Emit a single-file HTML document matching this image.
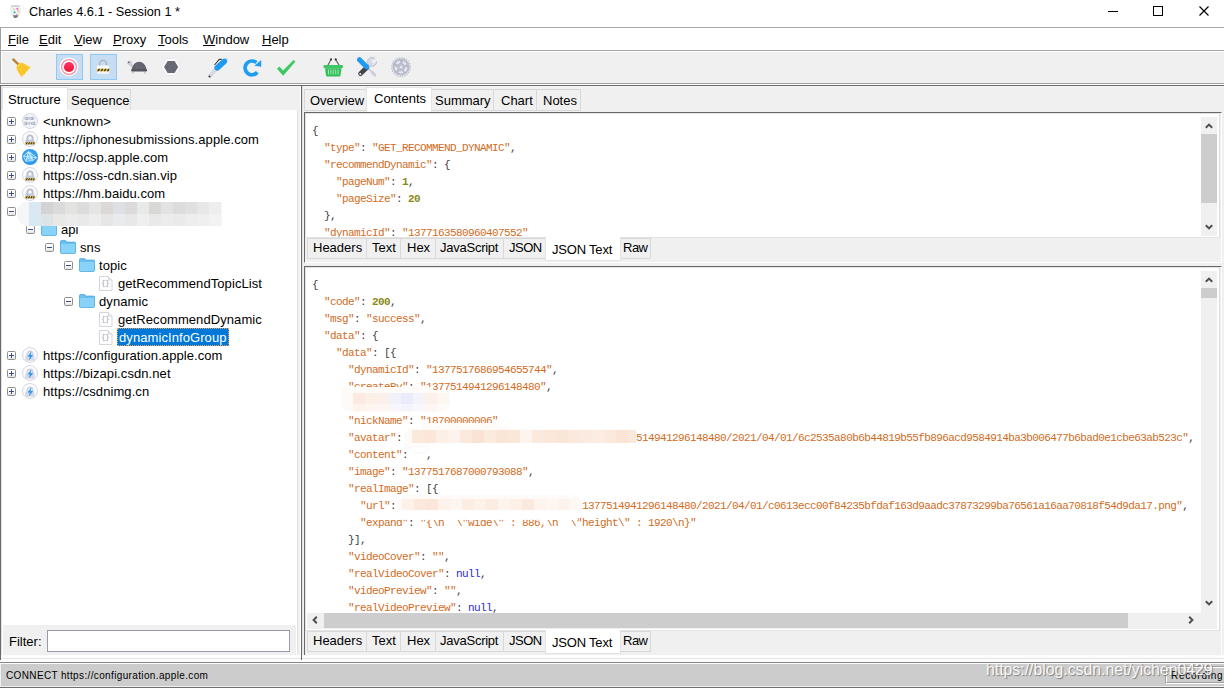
<!DOCTYPE html>
<html lang="en">
<head>
<meta charset="utf-8">
<title>Charles 4.6.1 - Session 1 *</title>
<style>
html,body{margin:0;padding:0;}
body{width:1224px;height:688px;position:relative;overflow:hidden;background:#f0f0f0;
  font-family:"Liberation Sans","Noto Sans CJK SC",sans-serif;font-size:13px;color:#000;}
.abs{position:absolute;}
#titlebar{left:0;top:0;width:1224px;height:27px;background:#fff;}
#title{left:29px;top:4px;font-size:12.7px;line-height:16px;white-space:nowrap;}
#menubar{left:0;top:27px;width:1224px;height:24px;background:#fff;border-top:1px solid #a8a8a8;border-bottom:1px solid #a8a8a8;box-sizing:border-box;}
.menu{position:absolute;top:4px;line-height:16px;font-size:13px;white-space:nowrap;}
.menu u{text-decoration:underline;text-underline-offset:1px;}
#toolbar{left:0;top:51px;width:1224px;height:32px;background:#f0f0f0;}
.tbsel{position:absolute;top:3px;width:26px;height:26px;box-sizing:border-box;background:#c5def3;border:1px solid #90c8f6;}
.l{position:absolute;}
/* tabs */
.tab{position:absolute;box-sizing:border-box;background:#f0f0f0;border:1px solid #d9d9d9;font-size:13px;line-height:16px;white-space:nowrap;padding:3px 0 0 4px;}
.tab.sel{background:#fff;border-color:#e3e3e3;border-bottom:none;}
/* tree */
.row{position:absolute;left:0;height:18px;line-height:18px;white-space:nowrap;font-size:13px;letter-spacing:0.08px;}
.pm{position:absolute;width:9px;height:9px;box-sizing:border-box;border:1px solid #8e8e8e;background:linear-gradient(#fff 45%,#e2e2e2);border-radius:1.5px;}
.pm:before{content:"";position:absolute;left:1px;top:3px;width:5px;height:1px;background:#3a4a8c;}
.pm.plus:after{content:"";position:absolute;left:3px;top:1px;width:1px;height:5px;background:#3a4a8c;}
.code{position:absolute;font-family:"Liberation Mono",monospace;font-size:11px;letter-spacing:-0.6px;line-height:17px;white-space:pre;color:#3c3c3c;}
.code .s{color:#d06c1e;}
.code .n{color:#8a8a1a;font-weight:bold;}
.code .k{color:#2828e0;}
</style>
</head>
<body>
<!-- TITLE BAR -->
<div id="titlebar" class="abs"></div>
<div id="title" class="abs">Charles 4.6.1 - Session 1 *</div>
<svg class="abs" style="left:9px;top:3px" width="17" height="17" viewBox="0 0 17 17"><path d="M11 2.800c2.500-1 4.300 1 3.500 3.600" fill="none" stroke="#e6e0ea" stroke-width=".7"/><path d="M2.200 3.200C2 6 1.900 8.500 2.400 10.200L4 12.600h5.200L10.800 10.200C11.300 8.500 11 6 10.600 3.200z" fill="#f3f4f7" stroke="#d4d6db" stroke-width=".6"/><ellipse cx="6.300" cy="3" rx="4.600" ry="1.100" fill="#d2d4d7"/><path d="M3.800 12.300h5.600l-.9 1.900-2.600 1.100-1.300-1z" fill="#777985"/><circle cx="5.500" cy="9.200" r="1.500" fill="#9fdcf0"/><circle cx="5.600" cy="9.300" r=".7" fill="#58b04a"/><circle cx="8.300" cy="5.700" r="1" fill="#f05cc0"/><circle cx="9" cy="8" r=".8" fill="#f27ac8"/><circle cx="5" cy="6.300" r=".8" fill="#a6cf4c"/><circle cx="9" cy="6.900" r=".7" fill="#f1d83c"/><circle cx="9.300" cy="10.400" r=".8" fill="#f3e05a"/><circle cx="7.600" cy="11.600" r=".6" fill="#b07ad0"/></svg>
<svg class="abs" style="left:1107px;top:5px" width="104" height="12" viewBox="0 0 104 12"><g fill="none" stroke="#000" stroke-width="1"><path d="M1 6.500h10"/><rect x="46.500" y="1.500" width="9" height="9"/><path d="M92.500 1.500l9 9M101.500 1.500l-9 9" stroke-width="1.150"/></g></svg>
<!-- MENU BAR -->
<div id="menubar" class="abs">
  <span class="menu" style="left:8px"><u>F</u>ile</span>
  <span class="menu" style="left:39px"><u>E</u>dit</span>
  <span class="menu" style="left:74px"><u>V</u>iew</span>
  <span class="menu" style="left:113px"><u>P</u>roxy</span>
  <span class="menu" style="left:158px"><u>T</u>ools</span>
  <span class="menu" style="left:203px"><u>W</u>indow</span>
  <span class="menu" style="left:262px"><u>H</u>elp</span>
</div>
<!-- TOOLBAR -->
<div id="toolbar" class="abs">
  <div class="tbsel" style="left:56px;width:27px"></div>
  <div class="tbsel" style="left:90px;width:27px"></div>
  <div class="l" style="left:0;top:0;width:1224px;height:1px;background:#fff"></div>
  <!-- broom -->
  <svg class="l" style="left:11px;top:6px" width="22" height="22" viewBox="0 0 22 22"><path d="M2.400 2.600L7.400 7.400" stroke="#b8863a" stroke-width="2.500" stroke-linecap="round"/><path d="M8.400 6C10 5.600 12 5.800 13.500 6.800c2 1.400 4 2.800 6.300 3.400C17 12.500 15 15 13.800 17.300c-1.200.3-2.400 1.500-3.300 2.900C9 17.500 6.800 15 5.800 12.200 5.400 10.500 5.600 8.800 6.400 7.800z" fill="#fbc92e"/><path d="M9 8.500c1.500 3 3 5.500 4.800 8.500M7.200 10.500c1 2.800 2.300 5.300 3.700 8M11.500 7.500c1.400 2.300 3 4.300 5 6.200" stroke="#f4b81f" stroke-width=".7" fill="none" opacity=".8"/><path d="M6.300 8.700L9.800 5.900" stroke="#fddc5c" stroke-width="1" opacity=".7"/></svg>
  <!-- record -->
  <svg class="l" style="left:59px;top:6px" width="20" height="20" viewBox="0 0 20 20"><defs><linearGradient id="rg" x1="0" y1="0" x2="0" y2="1"><stop offset="0" stop-color="#ff3470"/><stop offset="1" stop-color="#ee1530"/></linearGradient></defs><circle cx="10" cy="10.300" r="9.500" fill="#c9cdd6" opacity=".55"/><circle cx="10" cy="9.900" r="9.400" fill="#fdfdfe"/><circle cx="10" cy="10" r="7.400" fill="none" stroke="#f7889f" stroke-width="1.200"/><circle cx="10" cy="10" r="5.100" fill="url(#rg)"/></svg>
  <!-- lock -->
  <svg class="l" style="left:95px;top:7px" width="16" height="17" viewBox="0 0 16 17"><path d="M4.600 8.400V5.800a3.400 3.400 0 0 1 6.800 0v2.600" fill="none" stroke="#b6bac6" stroke-width="1.800"/><rect x="1.900" y="8" width="12.200" height="8" rx="1.300" fill="#d9dce4"/><rect x="1.900" y="7.600" width="12.200" height="7.800" rx="1.200" fill="#fcfcfe"/><rect x="1.900" y="10.800" width="12.200" height="2.700" fill="#f2c21c"/><path d="M3.600 10.800l-1.500 2.700h1.600l1.500-2.700zM6.800 10.800l-1.500 2.700h1.600l1.500-2.700zM10 10.800l-1.500 2.700h1.600l1.500-2.700zM13.200 10.800l-1.500 2.700h1.600l.8-1.500v-1.200z" fill="#30343f"/><rect x="1.900" y="13.500" width="12.200" height="1.900" rx=".9" fill="#f4f5f8"/></svg>
  <!-- turtle -->
  <svg class="l" style="left:126px;top:8px" width="23" height="16" viewBox="0 0 23 16"><path d="M4.300 4.800L7.800 9" stroke="#c9cbdc" stroke-width="2.600" stroke-linecap="round"/><ellipse cx="3.600" cy="4" rx="2.600" ry="2.200" fill="#c9cbdc"/><circle cx="2.700" cy="3.300" r=".75" fill="#4a4c55"/><path d="M5.700 12.500h2.400v1a1.200 1.200 0 0 1-2.400 0zM17.700 12.500h2.400v1a1.200 1.200 0 0 1-2.400 0z" fill="#c9cbdc"/><path d="M5.800 10.600C6.600 5.600 9.500 2.800 13.100 2.800s6.600 2.800 7.400 7.800z" fill="#5f616c"/><rect x="5.100" y="10" width="16" height="2.500" rx="1.200" fill="#55575f"/><path d="M10.500 4.500v5.500M13.100 4v6M15.700 4.500v5.500" stroke="#6f717c" stroke-width=".7" fill="none"/></svg>
  <!-- hexagon -->
  <svg class="l" style="left:160px;top:5px" width="22" height="22" viewBox="0 0 22 22"><path d="M1.300 11L6.200 2.500h9.800L20.900 11 16 19.500H6.200z" fill="#fcfcfe" stroke="#e1e3ef" stroke-width=".7"/><path d="M4.050 11L7.600 4.900h7l3.550 6.100-3.550 6.100h-7z" fill="#676975"/></svg>
  <!-- pen -->
  <svg class="l" style="left:207px;top:6px" width="22" height="22" viewBox="0 0 22 22"><path d="M3.400 18.600L9 12" stroke="#d5d8e3" stroke-width="3.800" stroke-linecap="round"/><circle cx="2.500" cy="19.500" r="1" fill="#2a2c30"/><path d="M18.300 3.300l1.100-1.100" stroke="#d3d6e3" stroke-width="2.600" stroke-linecap="round"/><path d="M10.200 10.800L17.300 4.400" stroke="#1e9bf0" stroke-width="5.600" stroke-linecap="round"/><path d="M7.500 8L12.300 2.400h2.400" stroke="#3a3c42" stroke-width="1.100" fill="none"/></svg>
  <!-- refresh -->
  <svg class="l" style="left:241px;top:6px" width="22" height="22" viewBox="0 0 22 22"><path d="M16.300 15.300A6.900 6.900 0 1 1 15.400 5.600" fill="none" stroke="#1e9df2" stroke-width="3.700"/><path d="M20.200 3v6.800L13.400 8.800z" fill="#1e9df2"/></svg>
  <!-- check -->
  <svg class="l" style="left:275px;top:8px" width="22" height="18" viewBox="0 0 22 18"><path d="M2 9.800l2.600-2.300 3.400 4L18.600 1l1.900 1.600L8.200 16.800z" fill="#3dc864"/></svg>
  <!-- basket -->
  <svg class="l" style="left:322px;top:6px" width="22" height="20" viewBox="0 0 22 20"><path d="M9 2.600L5.500 9M13.700 2.600L17.600 9" stroke="#5b5e66" stroke-width="1.100" fill="none"/><circle cx="9" cy="2.400" r="1.100" fill="#3a3c42"/><circle cx="13.700" cy="2.400" r="1.100" fill="#3a3c42"/><rect x="1.500" y="8" width="19.500" height="3.200" rx="1.200" fill="#3dc864"/><path d="M3 11.200h16.500l-1 7.300c-.1.700-.6 1.100-1.300 1.100H5.300c-.7 0-1.200-.4-1.300-1.100z" fill="#35bf5c"/><path d="M6.500 12.500v5M8.900 12.500v5M11.300 12.500v5M13.700 12.500v5M16.100 12.500v5" stroke="#9fe8b5" stroke-width="1"/></svg>
  <!-- tools -->
  <svg class="l" style="left:356px;top:5px" width="22" height="22" viewBox="0 0 22 22"><path d="M12.300 12.500L16 16.200" stroke="#c3c6d6" stroke-width="1.400"/><path d="M16.200 16.400l2.600 2.600" stroke="#cbcedd" stroke-width="3" stroke-linecap="round"/><path d="M13.500 8.600L11 11" stroke="#cdd0df" stroke-width="3"/><circle cx="16" cy="5.900" r="4.600" fill="#d6d9e6" stroke="#b9bccc" stroke-width=".8"/><path d="M16 6l4-4 1.800 1.800-4 4z" fill="#f0f0f0"/><circle cx="16.900" cy="5" r="1.350" fill="#f0f0f0"/><path d="M10.900 11.500L4.500 17.700" stroke="#42444c" stroke-width="4.600" stroke-linecap="round"/><circle cx="4.300" cy="17.900" r=".95" fill="#f4f4f6"/><path d="M3.500 3.700l7 7" stroke="#1e9bf0" stroke-width="5" stroke-linecap="round"/><path d="M10.500 10.700l1.900 1.900" stroke="#1e9bf0" stroke-width="3.200"/></svg>
  <!-- gear -->
  <svg class="l" style="left:391px;top:6px" width="21" height="21" viewBox="0 0 21 21"><circle cx="10" cy="10.100" r="9.200" fill="none" stroke="#b9bccc" stroke-width="1.400" stroke-dasharray="1.300 1.108"/><circle cx="10" cy="10.100" r="8.500" fill="#b9bccc"/><circle cx="10" cy="10.100" r="5.300" fill="none" stroke="#e6e8f0" stroke-width="2.300" stroke-dasharray="3.900 2.760" transform="rotate(68.500 10 10.100)"/><circle cx="10" cy="10.100" r="2.900" fill="#b9bccc"/><circle cx="10" cy="10.100" r="2.100" fill="none" stroke="#ced1de" stroke-width=".6"/><circle cx="10" cy="10.100" r="1.200" fill="#eef0f5"/></svg>
</div>
<div class="abs" style="left:0;top:27px;width:1px;height:57px;background:#a0a0a0"></div>
<div class="abs" style="left:1px;top:52px;width:1px;height:31px;background:#fff"></div>
<!-- separator lines under toolbar -->
<div class="abs" style="left:0;top:83px;width:1224px;height:1px;background:#a0a0a0"></div>
<div class="abs" style="left:0;top:84px;width:1224px;height:1px;background:#fff"></div>
<div class="abs" style="left:0;top:85px;width:1224px;height:1px;background:#696969"></div>
<div class="abs" style="left:0;top:86px;width:1224px;height:1px;background:#f5f5f5"></div>
<!-- LEFT PANEL -->
<div id="left" class="abs" style="left:0;top:85px;width:302px;height:577px;">
  <!-- outer left dark border -->
  <div class="l" style="left:0;top:0;width:1px;height:575px;background:#696969"></div>
  <div class="l" style="left:1px;top:1px;width:1px;height:574px;background:#e3e3e3"></div>
  <!-- tabs -->
  <div class="tab" style="left:67px;top:4px;width:64px;height:22px;padding-left:3px;">Sequence</div>
  <div class="tab sel" style="left:2px;top:2px;width:66px;height:24px;padding-left:5px;padding-top:4px;">Structure</div>
  <!-- tree white area -->
  <div class="l" id="tree" style="left:2px;top:25px;width:295px;height:515px;background:#fff;border-right:1px solid #e3e3e3;"></div>
  <!-- rows -->
  <div class="pm plus" style="left:7px;top:32px"></div><svg class="l" style="left:22px;top:28px" width="16" height="16" viewBox="0 0 16 16"><circle cx="8" cy="8" r="7.5" fill="#f4f5f9" stroke="#d3d6e2" stroke-width="1"/><g fill="none" stroke="#aab0c3" stroke-width="1"><rect x="4.2" y="4.3" width="1.6" height="2.2"/><path d="M3 4.2v2.4M7.3 4.2v2.4M11.8 4.2v2.4"/><rect x="9" y="4.3" width="1.6" height="2.2"/><rect x="3" y="9.3" width="1.6" height="2.2"/><path d="M6.2 9.2v2.4M7.8 9.2v2.4M9.4 9.2v2.4"/><rect x="11" y="9.3" width="1.6" height="2.2"/></g></svg><div class="row" style="left:43px;top:28px">&lt;unknown&gt;</div>
  <div class="pm plus" style="left:7px;top:50px"></div><svg class="l" style="left:22px;top:46px" width="16" height="16" viewBox="0 0 16 16"><circle cx="8" cy="8" r="7.5" fill="#fbfbfd" stroke="#d6d9e3" stroke-width="1"/><path d="M5.400 9.200V7a2.600 2.600 0 0 1 5.200 0v2.200" fill="none" stroke="#b9bdcc" stroke-width="1.900"/><rect x="3.400" y="8.600" width="9" height="5.200" rx="0.900" fill="#c5c9d7"/><rect x="3.200" y="11.300" width="9.400" height="2" fill="#ecbb18"/><path d="M4.600 11.300l-1.100 2h1.200l1.100-2zM7 11.300l-1.100 2h1.200l1.100-2zM9.400 11.300l-1.100 2h1.200l1.100-2zM11.800 11.300l-1.100 2h1.200l.7-1.300v-.7z" fill="#2f3440"/></svg><div class="row" style="left:43px;top:46px">https://iphonesubmissions.apple.com</div>
  <div class="pm plus" style="left:7px;top:68px"></div><svg class="l" style="left:22px;top:64px" width="16" height="16" viewBox="0 0 16 16"><circle cx="8" cy="8" r="8" fill="#2f97ee"/><circle cx="8" cy="7" r="6.500" fill="#3ea8f5" opacity=".6"/><path d="M5.700 3.500c1.800-1.600 4-.8 4.600 1.600l.8 4.800H4.900z" fill="#74ccfa" opacity=".9"/><g fill="none" stroke="#eaf6ff" stroke-width=".8" stroke-linejoin="round"><path d="M6.500 2.600L1.400 7.200 3.900 12.200l6.700-.6 4-3-8.100-6z"/><path d="M1.400 7.200l13.200 1.400M6.500 2.600l4.100 9M6.500 2.600L3.900 12.200M4.600 10h6.200"/></g></svg><div class="row" style="left:43px;top:64px">http://ocsp.apple.com</div>
  <div class="pm plus" style="left:7px;top:86px"></div><svg class="l" style="left:22px;top:82px" width="16" height="16" viewBox="0 0 16 16"><circle cx="8" cy="8" r="7.5" fill="#fbfbfd" stroke="#d6d9e3" stroke-width="1"/><path d="M5.400 9.200V7a2.600 2.600 0 0 1 5.200 0v2.200" fill="none" stroke="#b9bdcc" stroke-width="1.900"/><rect x="3.400" y="8.600" width="9" height="5.200" rx="0.900" fill="#c5c9d7"/><rect x="3.200" y="11.300" width="9.400" height="2" fill="#ecbb18"/><path d="M4.600 11.300l-1.100 2h1.200l1.100-2zM7 11.300l-1.100 2h1.200l1.100-2zM9.400 11.300l-1.100 2h1.200l1.100-2zM11.800 11.300l-1.100 2h1.200l.7-1.300v-.7z" fill="#2f3440"/></svg><div class="row" style="left:43px;top:82px">https://oss-cdn.sian.vip</div>
  <div class="pm plus" style="left:7px;top:104px"></div><svg class="l" style="left:22px;top:100px" width="16" height="16" viewBox="0 0 16 16"><circle cx="8" cy="8" r="7.5" fill="#fbfbfd" stroke="#d6d9e3" stroke-width="1"/><path d="M5.400 9.200V7a2.600 2.600 0 0 1 5.200 0v2.200" fill="none" stroke="#b9bdcc" stroke-width="1.900"/><rect x="3.400" y="8.600" width="9" height="5.200" rx="0.900" fill="#c5c9d7"/><rect x="3.200" y="11.300" width="9.400" height="2" fill="#ecbb18"/><path d="M4.600 11.300l-1.100 2h1.200l1.100-2zM7 11.300l-1.100 2h1.200l1.100-2zM9.400 11.300l-1.100 2h1.200l1.100-2zM11.800 11.300l-1.100 2h1.200l.7-1.300v-.7z" fill="#2f3440"/></svg><div class="row" style="left:43px;top:100px">https://hm.baidu.com</div>
  <div class="pm" style="left:7px;top:122px"></div>
  <div class="pm" style="left:26px;top:140px"></div><svg class="l" style="left:41px;top:136px" width="16" height="16" viewBox="0 0 16 16"><path d="M0.5 2.6a1 1 0 0 1 1-1h4.2l1.4 1.5h7.4a1 1 0 0 1 1 1v9.3a1 1 0 0 1-1 1h-13a1 1 0 0 1-1-1z" fill="#6cc0f0" stroke="#4aa5e0" stroke-width="0.8"/><path d="M0.9 5h14.2v8.3a.7.7 0 0 1-.7.7H1.6a.7.7 0 0 1-.7-.7z" fill="#88d3f7"/></svg><div class="row" style="left:61px;top:136px">api</div>
  <div class="pm" style="left:45px;top:158px"></div><svg class="l" style="left:60px;top:154px" width="16" height="16" viewBox="0 0 16 16"><path d="M0.5 2.6a1 1 0 0 1 1-1h4.2l1.4 1.5h7.4a1 1 0 0 1 1 1v9.3a1 1 0 0 1-1 1h-13a1 1 0 0 1-1-1z" fill="#6cc0f0" stroke="#4aa5e0" stroke-width="0.8"/><path d="M0.9 5h14.2v8.3a.7.7 0 0 1-.7.7H1.6a.7.7 0 0 1-.7-.7z" fill="#88d3f7"/></svg><div class="row" style="left:80px;top:154px">sns</div>
  <div class="pm" style="left:64px;top:176px"></div><svg class="l" style="left:79px;top:172px" width="16" height="16" viewBox="0 0 16 16"><path d="M0.5 2.6a1 1 0 0 1 1-1h4.2l1.4 1.5h7.4a1 1 0 0 1 1 1v9.3a1 1 0 0 1-1 1h-13a1 1 0 0 1-1-1z" fill="#6cc0f0" stroke="#4aa5e0" stroke-width="0.8"/><path d="M0.9 5h14.2v8.3a.7.7 0 0 1-.7.7H1.6a.7.7 0 0 1-.7-.7z" fill="#88d3f7"/></svg><div class="row" style="left:99px;top:172px">topic</div>
  <svg class="l" style="left:99px;top:191px" width="14" height="15" viewBox="0 0 14 15"><path d="M0.5 0.5h9l3.5 3.5v10.5h-12.5z" fill="#fdfdfd" stroke="#d4d6dc" stroke-width="1"/><path d="M9.5 0.5v3.5h3.5" fill="#eceef2" stroke="#d4d6dc" stroke-width="1"/><text x="6.2" y="9" font-family="Liberation Mono,monospace" font-size="7" text-anchor="middle" fill="#9a9eac" letter-spacing="-0.3">{}</text></svg><div class="row" style="left:118px;top:190px">getRecommendTopicList</div>
  <div class="pm" style="left:64px;top:212px"></div><svg class="l" style="left:79px;top:208px" width="16" height="16" viewBox="0 0 16 16"><path d="M0.5 2.6a1 1 0 0 1 1-1h4.2l1.4 1.5h7.4a1 1 0 0 1 1 1v9.3a1 1 0 0 1-1 1h-13a1 1 0 0 1-1-1z" fill="#6cc0f0" stroke="#4aa5e0" stroke-width="0.8"/><path d="M0.9 5h14.2v8.3a.7.7 0 0 1-.7.7H1.6a.7.7 0 0 1-.7-.7z" fill="#88d3f7"/></svg><div class="row" style="left:99px;top:208px">dynamic</div>
  <svg class="l" style="left:99px;top:227px" width="14" height="15" viewBox="0 0 14 15"><path d="M0.5 0.5h9l3.5 3.5v10.5h-12.5z" fill="#fdfdfd" stroke="#d4d6dc" stroke-width="1"/><path d="M9.5 0.5v3.5h3.5" fill="#eceef2" stroke="#d4d6dc" stroke-width="1"/><text x="6.2" y="9" font-family="Liberation Mono,monospace" font-size="7" text-anchor="middle" fill="#9a9eac" letter-spacing="-0.3">{}</text></svg><div class="row" style="left:118px;top:226px">getRecommendDynamic</div>
  <svg class="l" style="left:99px;top:245px" width="14" height="15" viewBox="0 0 14 15"><path d="M0.5 0.5h9l3.5 3.5v10.5h-12.5z" fill="#fdfdfd" stroke="#d4d6dc" stroke-width="1"/><path d="M9.5 0.5v3.5h3.5" fill="#eceef2" stroke="#d4d6dc" stroke-width="1"/><text x="6.2" y="9" font-family="Liberation Mono,monospace" font-size="7" text-anchor="middle" fill="#9a9eac" letter-spacing="-0.3">{}</text></svg><div class="row" style="left:117px;top:243px;width:112px;box-sizing:border-box;background:#0078d7;color:#fff;border:1px dotted #e8a060;line-height:18px;padding-left:1px;">dynamicInfoGroup</div>
  <div class="pm plus" style="left:7px;top:266px"></div><svg class="l" style="left:22px;top:262px" width="16" height="16" viewBox="0 0 16 16"><circle cx="8" cy="8" r="7.5" fill="#fbfbfd" stroke="#d6d9e3" stroke-width="1"/><path d="M5.400 9.200V7a2.600 2.600 0 0 1 5.200 0v2.200" fill="none" stroke="#cfd2de" stroke-width="1.900"/><rect x="3.200" y="8.800" width="9.400" height="5" rx="0.900" fill="#d6d9e4"/><path d="M9.400 4.200L5.600 9.500h2.200l-.9 4L11.100 8H8.700z" fill="#2a97f0"/></svg><div class="row" style="left:43px;top:262px">https://configuration.apple.com</div>
  <div class="pm plus" style="left:7px;top:284px"></div><svg class="l" style="left:22px;top:280px" width="16" height="16" viewBox="0 0 16 16"><circle cx="8" cy="8" r="7.5" fill="#fbfbfd" stroke="#d6d9e3" stroke-width="1"/><path d="M5.400 9.200V7a2.600 2.600 0 0 1 5.200 0v2.200" fill="none" stroke="#cfd2de" stroke-width="1.900"/><rect x="3.200" y="8.800" width="9.400" height="5" rx="0.900" fill="#d6d9e4"/><path d="M9.400 4.200L5.600 9.500h2.200l-.9 4L11.100 8H8.700z" fill="#2a97f0"/></svg><div class="row" style="left:43px;top:280px">https://bizapi.csdn.net</div>
  <div class="pm plus" style="left:7px;top:302px"></div><svg class="l" style="left:22px;top:298px" width="16" height="16" viewBox="0 0 16 16"><circle cx="8" cy="8" r="7.5" fill="#fbfbfd" stroke="#d6d9e3" stroke-width="1"/><path d="M5.400 9.200V7a2.600 2.600 0 0 1 5.200 0v2.200" fill="none" stroke="#cfd2de" stroke-width="1.900"/><rect x="3.200" y="8.800" width="9.400" height="5" rx="0.900" fill="#d6d9e4"/><path d="M9.400 4.200L5.600 9.500h2.200l-.9 4L11.100 8H8.700z" fill="#2a97f0"/></svg><div class="row" style="left:43px;top:298px">https://csdnimg.cn</div>
  <!-- mosaic over hidden host row -->
  <div class="l" style="left:17px;top:117px;width:205px;height:24px;background:#f4f6f8;border-radius:11px 0 0 11px;"></div>
  <div class="l" style="left:29px;top:117px;width:12px;height:12px;background:#d9e8f2"></div><div class="l" style="left:29px;top:129px;width:12px;height:12px;background:#d9e9f4"></div>
  <div class="l" style="left:41px;top:117px;width:12px;height:12px;background:#d5d2d3"></div><div class="l" style="left:41px;top:129px;width:12px;height:12px;background:#dde4e8"></div>
  <div class="l" style="left:53px;top:117px;width:12px;height:12px;background:#dcdbdb"></div><div class="l" style="left:53px;top:129px;width:12px;height:12px;background:#e8e8e7"></div>
  <div class="l" style="left:65px;top:117px;width:12px;height:12px;background:#e4e3e2"></div><div class="l" style="left:65px;top:129px;width:12px;height:12px;background:#ebebeb"></div>
  <div class="l" style="left:77px;top:117px;width:12px;height:12px;background:#dddcdd"></div><div class="l" style="left:77px;top:129px;width:12px;height:12px;background:#e9e9ea"></div>
  <div class="l" style="left:89px;top:117px;width:12px;height:12px;background:#e6e5e5"></div><div class="l" style="left:89px;top:129px;width:12px;height:12px;background:#ededed"></div>
  <div class="l" style="left:101px;top:117px;width:12px;height:12px;background:#dcd8d7"></div><div class="l" style="left:101px;top:129px;width:12px;height:12px;background:#e6e6e6"></div>
  <div class="l" style="left:113px;top:117px;width:12px;height:12px;background:#dde0e4"></div><div class="l" style="left:113px;top:129px;width:12px;height:12px;background:#e9ebec"></div>
  <div class="l" style="left:125px;top:117px;width:12px;height:12px;background:#dcdada"></div><div class="l" style="left:125px;top:129px;width:12px;height:12px;background:#e8e8e8"></div>
  <div class="l" style="left:137px;top:117px;width:12px;height:12px;background:#e8e9e9"></div><div class="l" style="left:137px;top:129px;width:12px;height:12px;background:#efefef"></div>
  <div class="l" style="left:149px;top:117px;width:12px;height:12px;background:#d8d8d7"></div><div class="l" style="left:149px;top:129px;width:12px;height:12px;background:#e9e9e9"></div>
  <div class="l" style="left:161px;top:117px;width:12px;height:12px;background:#e3e3e4"></div><div class="l" style="left:161px;top:129px;width:12px;height:12px;background:#ececec"></div>
  <div class="l" style="left:173px;top:117px;width:12px;height:12px;background:#dddcdc"></div><div class="l" style="left:173px;top:129px;width:12px;height:12px;background:#eaeaea"></div>
  <div class="l" style="left:185px;top:117px;width:12px;height:12px;background:#e0e0e1"></div><div class="l" style="left:185px;top:129px;width:12px;height:12px;background:#ededed"></div>
  <div class="l" style="left:197px;top:117px;width:12px;height:12px;background:#e7e7e7"></div><div class="l" style="left:197px;top:129px;width:12px;height:12px;background:#efefef"></div>
  <div class="l" style="left:209px;top:117px;width:12px;height:12px;background:#eeeeee"></div><div class="l" style="left:209px;top:129px;width:12px;height:12px;background:#f2f2f2"></div>
  <!-- filter -->
  <div class="l" style="left:2px;top:540px;width:1px;height:33px;background:#fff"></div>
  <div class="l" style="left:296px;top:540px;width:1px;height:33px;background:#fff"></div>
  <div class="l" style="left:297px;top:540px;width:1px;height:33px;background:#e3e3e3"></div>
  <div class="l" style="left:9px;top:549px;line-height:16px;">Filter:</div>
  <div class="l" style="left:47px;top:545px;width:243px;height:22px;box-sizing:border-box;border:1px solid #979aac;background:#fff;"></div>
  <!-- bottom border of left panel -->
  <div class="l" style="left:0;top:574px;width:301px;height:1px;background:#fff"></div>
</div>
<!-- RIGHT PANEL -->
<div class="abs" style="left:300px;top:86px;width:1px;height:574px;background:#fff"></div>
<div class="abs" style="left:301px;top:85px;width:1px;height:575px;background:#696969"></div>
<div class="abs" style="left:302px;top:86px;width:1px;height:574px;background:#e3e3e3"></div>
<div class="tab" style="left:304px;top:89px;width:63px;height:22px;padding-left:5px;">Overview</div>
<div class="tab" style="left:430px;top:89px;width:64px;height:22px;padding-left:4px;">Summary</div>
<div class="tab" style="left:493px;top:89px;width:44px;height:22px;padding-left:7px;">Chart</div>
<div class="tab" style="left:536px;top:89px;width:45px;height:22px;padding-left:6px;">Notes</div>
<div class="tab sel" style="left:366px;top:87px;width:66px;height:26px;padding-left:7px;padding-top:3px;">Contents</div>
<div class="abs" style="left:304px;top:112px;width:918px;height:151px;box-sizing:border-box;border-top:1px solid #696969;border-left:1px solid #696969;border-right:1px solid #fff;border-bottom:1px solid #fff;"></div>
<div class="abs" style="left:305px;top:113px;width:915px;height:125px;box-sizing:border-box;background:#fff;border:1px solid #e3e3e3;border-right-color:#dcdcdc;"></div>
<div class="abs" id="upper" style="left:306px;top:114px;width:895px;height:123px;overflow:hidden;background:#fff;"><div class="code" style="left:6px;top:8.5px">{
  <span class="s">&quot;type&quot;</span>: <span class="s">&quot;GET_RECOMMEND_DYNAMIC&quot;</span>,
  <span class="s">&quot;recommendDynamic&quot;</span>: {
    <span class="s">&quot;pageNum&quot;</span>: <span class="n">1</span>,
    <span class="s">&quot;pageSize&quot;</span>: <span class="n">20</span>
  },
  <span class="s">&quot;dynamicId&quot;</span>: <span class="s">&quot;1377163580960407552&quot;</span></div></div>
<div class="abs" style="left:1201px;top:117px;width:16px;height:119px;background:#f0f0f0"></div>
<div class="abs" style="left:1201px;top:134px;width:16px;height:69px;background:#cdcdcd"></div>
<svg class="abs" style="left:1204px;top:122px" width="10" height="7" viewBox="0 0 10 7"><path d="M1.800 5.800L5 2.600l3.200 3.200" fill="none" stroke="#505050" stroke-width="2"/></svg>
<svg class="abs" style="left:1204px;top:224px" width="10" height="7" viewBox="0 0 10 7"><path d="M1.800 1.200L5 4.400l3.200-3.200" fill="none" stroke="#505050" stroke-width="2"/></svg>
<div class="tab" style="left:307px;top:238px;width:60px;height:21px;padding-left:5px;padding-top:1px;">Headers</div>
<div class="tab" style="left:366px;top:238px;width:35px;height:21px;padding-left:5px;padding-top:1px;">Text</div>
<div class="tab" style="left:400px;top:238px;width:36px;height:21px;padding-left:5px;padding-top:1px;text-indent:1px;">Hex</div>
<div class="tab" style="left:435px;top:238px;width:69px;height:21px;padding-left:4px;padding-top:1px;letter-spacing:-0.25px;">JavaScript</div>
<div class="tab" style="left:503px;top:238px;width:44px;height:21px;padding-left:5px;padding-top:1px;letter-spacing:-0.5px;">JSON</div>
<div class="tab" style="left:619px;top:238px;width:32px;height:21px;padding-left:3px;padding-top:1px;letter-spacing:-0.5px;">Raw</div>
<div class="tab sel" style="left:545px;top:237px;width:76px;height:24px;padding-left:6px;padding-top:5px;letter-spacing:-0.2px;border:1px solid #e3e3e3;border-top:none;">JSON Text</div>
<div class="abs" style="left:304px;top:266px;width:918px;height:391px;box-sizing:border-box;border-top:1px solid #696969;border-left:1px solid #696969;border-right:1px solid #fff;border-bottom:1px solid #fff;"></div>
<div class="abs" style="left:305px;top:267px;width:915px;height:364px;box-sizing:border-box;background:#fff;border:1px solid #e3e3e3;border-right-color:#dcdcdc;"></div>
<div class="abs" id="lower" style="left:306px;top:268px;width:895px;height:345px;overflow:hidden;background:#fff;"><div class="code" style="left:6px;top:8.5px">{
  <span class="s">&quot;code&quot;</span>: <span class="n">200</span>,
  <span class="s">&quot;msg&quot;</span>: <span class="s">&quot;success&quot;</span>,
  <span class="s">&quot;data&quot;</span>: {
    <span class="s">&quot;data&quot;</span>: [{
      <span class="s">&quot;dynamicId&quot;</span>: <span class="s">&quot;1377517686954655744&quot;</span>,
      <span class="s">&quot;createBy&quot;</span>: <span class="s">&quot;1377514941296148480&quot;</span>,

      <span class="s">&quot;nickName&quot;</span>: <span class="s">&quot;18700000006&quot;</span>,
      <span class="s">&quot;avatar&quot;</span>: <span class="s">&quot;                                     514941296148480/2021/04/01/6c2535a80b6b44819b55fb896acd9584914ba3b006477b6bad0e1cbe63ab523c&quot;</span>,
      <span class="s">&quot;content&quot;</span>: <span class="s">&quot;&quot;</span>,
      <span class="s">&quot;image&quot;</span>: <span class="s">&quot;1377517687000793088&quot;</span>,
      <span class="s">&quot;realImage&quot;</span>: [{
        <span class="s">&quot;url&quot;</span>: <span class="s">&quot;                             1377514941296148480/2021/04/01/c0613ecc00f84235bfdaf163d9aadc37873299ba76561a16aa70818f54d9da17.png&quot;</span>,
        <span class="s">&quot;expand&quot;</span>: <span class="s">&quot;{\n  \&quot;wide\&quot; : 886,\n  \&quot;height\&quot; : 1920\n}&quot;</span>
      }],
      <span class="s">&quot;videoCover&quot;</span>: <span class="s">&quot;&quot;</span>,
      <span class="s">&quot;realVideoCover&quot;</span>: <span class="k">null</span>,
      <span class="s">&quot;videoPreview&quot;</span>: <span class="s">&quot;&quot;</span>,
      <span class="s">&quot;realVideoPreview&quot;</span>: <span class="k">null</span>,
      <span class="s">&quot;isLike&quot;</span>: <span class="n">0</span>,</div>
<!-- mosaic overlays -->
<div class="l" style="left:35px;top:119px;width:92px;height:25px;background:#fefbf9;border-radius:0 0 0 12px;"></div>
<div class="l" style="left:35px;top:124px;width:109px;height:20px;background:#fefaf7;border-radius:10px 10px 10px 10px;"></div>
<div class="l" style="left:47px;top:125px;width:12px;height:11px;background:#fbeadf;"></div>
<div class="l" style="left:59px;top:125px;width:12px;height:11px;background:#fcefe6;"></div>
<div class="l" style="left:71px;top:125px;width:12px;height:11px;background:#fbf0ea;"></div>
<div class="l" style="left:83px;top:125px;width:12px;height:11px;background:#f1f1fb;"></div>
<div class="l" style="left:95px;top:125px;width:12px;height:11px;background:#e9ebfb;"></div>
<div class="l" style="left:107px;top:125px;width:12px;height:11px;background:#f3f3fa;"></div>
<div class="l" style="left:119px;top:125px;width:12px;height:11px;background:#fbf1ea;"></div>
<div class="l" style="left:131px;top:125px;width:12px;height:11px;background:#fdf6f1;"></div>
<div class="l" style="left:47px;top:136px;width:12px;height:7px;background:#fdf3ec;"></div>
<div class="l" style="left:59px;top:136px;width:12px;height:7px;background:#fdf5ef;"></div>
<div class="l" style="left:71px;top:136px;width:12px;height:7px;background:#fdf6f2;"></div>
<div class="l" style="left:83px;top:136px;width:12px;height:7px;background:#f6f6fc;"></div>
<div class="l" style="left:95px;top:136px;width:12px;height:7px;background:#f3f4fc;"></div>
<div class="l" style="left:107px;top:136px;width:12px;height:7px;background:#f8f8fc;"></div>
<div class="l" style="left:119px;top:136px;width:12px;height:7px;background:#fdf6f2;"></div>
<div class="l" style="left:115px;top:155px;width:89px;height:7px;background:#fefbf9;"></div>
<div class="l" style="left:193px;top:150px;width:14px;height:8px;background:#ffffff;"></div>
<div class="l" style="left:98px;top:161px;width:232px;height:14px;background:#fefaf7;border-radius:8px 0 0 8px;"></div>
<div class="l" style="left:106px;top:162px;width:12px;height:13px;background:#fbe9dc;"></div>
<div class="l" style="left:118px;top:162px;width:12px;height:13px;background:#fbe6d8;"></div>
<div class="l" style="left:130px;top:162px;width:12px;height:13px;background:#fcefe6;"></div>
<div class="l" style="left:142px;top:162px;width:12px;height:13px;background:#fdf3ec;"></div>
<div class="l" style="left:154px;top:162px;width:12px;height:13px;background:#fbe9de;"></div>
<div class="l" style="left:166px;top:162px;width:12px;height:13px;background:#fae3d3;"></div>
<div class="l" style="left:178px;top:162px;width:12px;height:13px;background:#fbeade;"></div>
<div class="l" style="left:190px;top:162px;width:12px;height:13px;background:#fae5d6;"></div>
<div class="l" style="left:202px;top:162px;width:12px;height:13px;background:#fbe7da;"></div>
<div class="l" style="left:214px;top:162px;width:12px;height:13px;background:#fdf4ee;"></div>
<div class="l" style="left:226px;top:162px;width:12px;height:13px;background:#fbe9dd;"></div>
<div class="l" style="left:238px;top:162px;width:12px;height:13px;background:#fbe8db;"></div>
<div class="l" style="left:250px;top:162px;width:12px;height:13px;background:#fae6d7;"></div>
<div class="l" style="left:262px;top:162px;width:12px;height:13px;background:#fbe9dd;"></div>
<div class="l" style="left:274px;top:162px;width:12px;height:13px;background:#fbeadf;"></div>
<div class="l" style="left:286px;top:162px;width:12px;height:13px;background:#fcede3;"></div>
<div class="l" style="left:298px;top:162px;width:12px;height:13px;background:#fbe9dd;"></div>
<div class="l" style="left:310px;top:162px;width:12px;height:13px;background:#fae5d5;"></div>
<div class="l" style="left:322px;top:162px;width:8px;height:13px;background:#fbe8dc;"></div>
<div class="l" style="left:98px;top:175px;width:26px;height:9px;background:#fefcfb;border-radius:0 0 0 8px;"></div>
<div class="l" style="left:106px;top:180px;width:14px;height:6px;background:#ffffff;opacity:.85;"></div>
<div class="l" style="left:91px;top:227px;width:184px;height:24px;background:#fefaf7;border-radius:11px;"></div>
<div class="l" style="left:96px;top:231px;width:12px;height:12px;background:#fdf1e9;"></div>
<div class="l" style="left:108px;top:231px;width:12px;height:12px;background:#fce9de;"></div>
<div class="l" style="left:120px;top:231px;width:12px;height:12px;background:#fbe6d9;"></div>
<div class="l" style="left:132px;top:231px;width:12px;height:12px;background:#fdf3ec;"></div>
<div class="l" style="left:144px;top:231px;width:12px;height:12px;background:#fdf5ef;"></div>
<div class="l" style="left:156px;top:231px;width:12px;height:12px;background:#fcece2;"></div>
<div class="l" style="left:168px;top:231px;width:12px;height:12px;background:#fdf2ea;"></div>
<div class="l" style="left:180px;top:231px;width:12px;height:12px;background:#fcebe0;"></div>
<div class="l" style="left:192px;top:231px;width:12px;height:12px;background:#fdf4ee;"></div>
<div class="l" style="left:204px;top:231px;width:12px;height:12px;background:#fdf0e7;"></div>
<div class="l" style="left:216px;top:231px;width:12px;height:12px;background:#fbe9dd;"></div>
<div class="l" style="left:228px;top:231px;width:12px;height:12px;background:#fdf4ed;"></div>
<div class="l" style="left:240px;top:231px;width:12px;height:12px;background:#fdf6f1;"></div>
<div class="l" style="left:252px;top:231px;width:12px;height:12px;background:#fdf3ec;"></div>
<div class="l" style="left:264px;top:231px;width:10px;height:12px;background:#fef8f5;"></div>
<div class="l" style="left:92px;top:242px;width:180px;height:10px;background:#ffffff;opacity:.9;"></div>
</div>
<div class="abs" style="left:1201px;top:271px;width:16px;height:342px;background:#f0f0f0"></div>
<div class="abs" style="left:1201px;top:288px;width:16px;height:10px;background:#cdcdcd"></div>
<svg class="abs" style="left:1204px;top:276px" width="10" height="7" viewBox="0 0 10 7"><path d="M1.800 5.800L5 2.600l3.200 3.200" fill="none" stroke="#505050" stroke-width="2"/></svg>
<svg class="abs" style="left:1204px;top:600px" width="10" height="7" viewBox="0 0 10 7"><path d="M1.800 1.200L5 4.400l3.200-3.200" fill="none" stroke="#505050" stroke-width="2"/></svg>
<div class="abs" style="left:307px;top:613px;width:910px;height:16px;background:#f0f0f0"></div>
<div class="abs" style="left:324px;top:613px;width:804px;height:15px;background:#cdcdcd"></div>
<svg class="abs" style="left:311px;top:615px" width="7" height="10" viewBox="0 0 7 10"><path d="M5.800 1.800L2.600 5l3.200 3.200" fill="none" stroke="#505050" stroke-width="2"/></svg>
<svg class="abs" style="left:1188px;top:615px" width="7" height="10" viewBox="0 0 7 10"><path d="M1.200 1.800L4.400 5 1.200 8.200" fill="none" stroke="#505050" stroke-width="2"/></svg>
<div class="tab" style="left:307px;top:631px;width:60px;height:21px;padding-left:5px;padding-top:1px;">Headers</div>
<div class="tab" style="left:366px;top:631px;width:35px;height:21px;padding-left:5px;padding-top:1px;">Text</div>
<div class="tab" style="left:400px;top:631px;width:36px;height:21px;padding-left:5px;padding-top:1px;text-indent:1px;">Hex</div>
<div class="tab" style="left:435px;top:631px;width:69px;height:21px;padding-left:4px;padding-top:1px;letter-spacing:-0.25px;">JavaScript</div>
<div class="tab" style="left:503px;top:631px;width:44px;height:21px;padding-left:5px;padding-top:1px;letter-spacing:-0.5px;">JSON</div>
<div class="tab" style="left:619px;top:631px;width:32px;height:21px;padding-left:3px;padding-top:1px;letter-spacing:-0.5px;">Raw</div>
<div class="tab sel" style="left:545px;top:630px;width:76px;height:24px;padding-left:6px;padding-top:5px;letter-spacing:-0.2px;border:1px solid #e3e3e3;border-top:none;">JSON Text</div>
<!-- STATUS BAR -->
<div id="status" class="abs" style="left:0;top:655px;width:1224px;height:33px;">
  <div class="l" style="left:0;top:0;width:1224px;height:3px;background:#fdfdfd"></div>
  <div class="l" style="left:0;top:3px;width:1224px;height:1px;background:#e6e6e6"></div>
  <div class="l" style="left:0;top:4px;width:1224px;height:3px;background:#fcfcfc"></div>
  <div class="l" style="left:0;top:7px;width:1224px;height:1px;background:#858585"></div>
  <div class="l" style="left:0;top:8px;width:1224px;height:1px;background:#fbfbfb"></div>
  <div class="l" style="left:301px;top:0;width:1px;height:5px;background:#696969"></div>
  <div class="l" style="left:0;top:0;width:1px;height:5px;background:#696969"></div>
  <div class="l" style="left:1px;top:9px;width:1223px;height:22px;background:#cccccc"></div>
  <div class="l" style="left:0;top:9px;width:1px;height:22px;background:#f0f0f0"></div>
  <div class="l" style="left:0;top:31px;width:1224px;height:1px;background:#f0f0f0"></div>
  <div class="l" style="left:0;top:32px;width:1224px;height:1px;background:#6e6e6e"></div>
  <div class="l" style="left:6px;top:14px;font-size:10px;letter-spacing:.36px;line-height:14px;white-space:nowrap;">CONNECT https://configuration.apple.com</div>
  <div class="l" style="left:1165px;top:11px;width:59px;height:18px;box-sizing:border-box;background:#cccccc;border-top:1px solid #a0a0a0;border-left:1px solid #a0a0a0;border-bottom:1px solid #fff;"><div style="width:100%;height:100%;box-sizing:border-box;border-top:1px solid #fff;border-left:1px solid #fff;border-bottom:1px solid #a0a0a0;"></div></div>
  <div class="l" style="left:1171px;top:14px;font-size:10px;letter-spacing:.75px;line-height:14px;white-space:nowrap;">Recording</div>
  <div class="l" id="wm" style="left:986px;top:6px;font-size:15.800px;line-height:18px;color:#fff;opacity:.85;text-shadow:1px 1px 1px rgba(90,90,90,.8);white-space:nowrap;">https://blog.csdn.net/yichen0429</div>
</div>
</body>
</html>
